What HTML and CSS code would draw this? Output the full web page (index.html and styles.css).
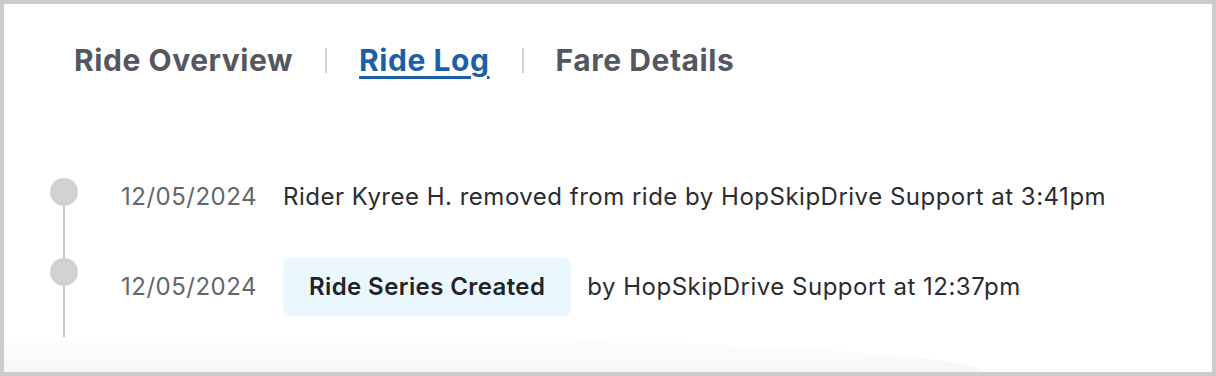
FILE: index.html
```html
<!DOCTYPE html>
<html lang="en">
<head>
    <meta charset="UTF-8">
    <meta name="viewport" content="width=device-width, initial-scale=1.0">
    <title>Ride Log</title>
    <link rel="stylesheet" href="styles.css">
</head>
<body>
    <div class="panel">
        <!-- Onglets -->
        <nav class="tabs">
            <a class="tab" href="#">Ride Overview</a>
            <span class="divider"></span>
            <a class="tab active" href="#">Ride Log</a>
            <span class="divider"></span>
            <a class="tab" href="#">Fare Details</a>
        </nav>

        <!-- Journal -->
        <ul class="timeline">
            <li class="entry">
                <div class="marker"><span class="dot"></span><span class="stem"></span></div>
                <div class="entry-body">
                    <span class="date">12/05/2024</span>
                    <span class="message">Rider Kyree H. removed from ride by HopSkipDrive Support at 3:41pm</span>
                </div>
            </li>
            <li class="entry">
                <div class="marker"><span class="dot"></span><span class="stem"></span></div>
                <div class="entry-body">
                    <span class="date">12/05/2024</span>
                    <span class="badge">Ride Series Created</span>
                    <span class="message">by HopSkipDrive Support at 12:37pm</span>
                </div>
            </li>
        </ul>

        <div class="fade"></div>
    </div>
</body>
</html>
```

FILE: styles.css
```css
body {
    margin: 0;
    font-family: Inter, "Noto Sans", sans-serif;
    background-color: #fff;
}

.panel {
    position: relative;
    height: 376px;
    box-sizing: border-box;
    border: 4px solid #cccccc;
    background-color: #fff;
    overflow: hidden;
}

.tabs {
    display: flex;
    align-items: center;
    padding: 35px 0 0 70px;
    height: 42px;
}

.tab {
    font-size: 30px;
    font-weight: 700;
    letter-spacing: 0.55px;
    color: #54575d;
    text-decoration: none;
    line-height: 42px;
}

.tab.active {
    color: #1b5ea9;
    text-decoration: underline;
    text-decoration-thickness: 3px;
    text-underline-offset: 5px;
}

.divider {
    width: 2px;
    height: 25px;
    background-color: #d0d0d0;
    margin: 0 32px;
}

.timeline {
    list-style: none;
    margin: 0;
    padding: 97px 0 0 46px;
}

.entry {
    display: flex;
    align-items: stretch;
}

.entry:first-child {
    padding-bottom: 42px;
}

.entry:last-child {
    padding-bottom: 21px;
}

.marker {
    display: flex;
    flex-direction: column;
    align-items: center;
    width: 28px;
    margin-right: 43px;
}

.dot {
    width: 28px;
    height: 28px;
    border-radius: 50%;
    background-color: #d2d2d2;
    flex-shrink: 0;
}

.stem {
    flex: 1;
    width: 2px;
    background-color: #c5c7cc;
    margin-bottom: -42px;
}

.entry:last-child .stem {
    margin-bottom: -21px;
}

.entry-body {
    display: flex;
    align-items: center;
    font-size: 24px;
    letter-spacing: 0.5px;
    line-height: 38px;
}

.date {
    color: #64676c;
    margin-right: 26px;
}

.message {
    color: #2b2c2f;
}

.badge {
    display: inline-flex;
    align-items: center;
    height: 58px;
    padding: 0 26px;
    border-radius: 7px;
    background-color: #eaf8fe;
    color: #222326;
    font-weight: 560;
    letter-spacing: 0.4px;
    margin-right: 16px;
}

.fade {
    position: absolute;
    left: 0;
    bottom: 0;
    width: 980px;
    height: 40px;
    background: linear-gradient(to bottom, rgba(0, 0, 0, 0), rgba(0, 0, 0, 0.03));
    border-top-right-radius: 100% 100%;
    pointer-events: none;
}
```
